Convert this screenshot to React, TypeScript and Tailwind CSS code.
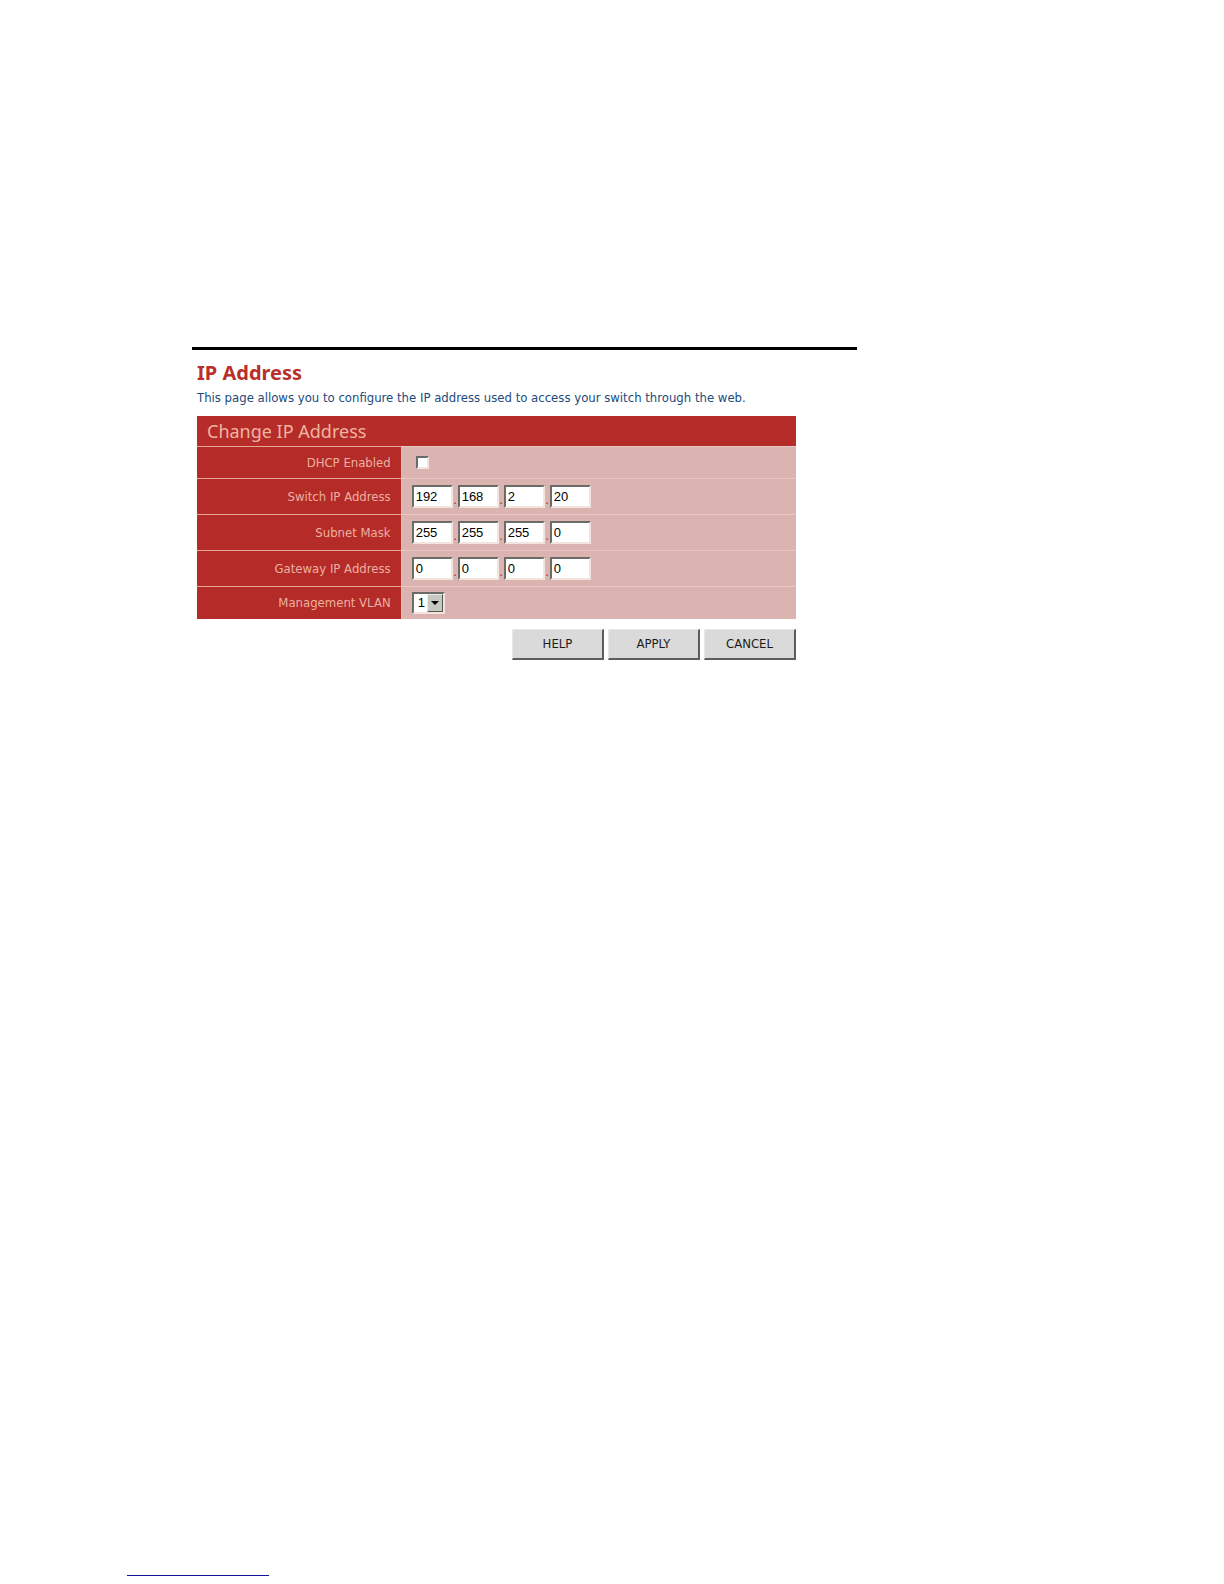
import React from 'react';

const sunken =
  'border-2 border-t-[#6b6b68] border-l-[#6b6b68] border-r-[#f3e4e0] border-b-[#f3e4e0] bg-white';

const addresses = [
  { label: 'Switch IP Address', octets: ['192', '168', '2', '20'] },
  { label: 'Subnet Mask', octets: ['255', '255', '255', '0'] },
  { label: 'Gateway IP Address', octets: ['0', '0', '0', '0'] },
];

function Row({
  label,
  htmlFor,
  height,
  children,
}: {
  label: string;
  htmlFor: string;
  height: string;
  children: React.ReactNode;
}) {
  return (
    <tr className={height}>
      <th
        scope="row"
        className="border-t border-[#e8a898] bg-[#b42b28] pr-2.5 text-right align-middle text-[13px] leading-5 font-normal text-[#eeb0a0]"
      >
        <label htmlFor={htmlFor}>{label}</label>
      </th>
      <td className="border-t border-l border-t-[#e8c8c4] border-l-[#e2bcb9] bg-[#dbb4b2] pl-2.5 align-middle">
        {children}
      </td>
    </tr>
  );
}

function Octets({ name, octets }: { name: string; octets: string[] }) {
  return (
    <div className="flex items-end">
      {octets.map((value, i) => (
        <React.Fragment key={i}>
          {i > 0 && (
            <span className="w-[5px] text-center text-[13px] leading-4 text-[#b42b48]">.</span>
          )}
          <input
            id={name + '-' + i}
            aria-label={name + ' part ' + (i + 1)}
            type="text"
            defaultValue={value}
            maxLength={3}
            className={`${sunken} h-[23px] w-[41px] rounded-none px-0.5 font-['Liberation_Sans',sans-serif] text-[13px] leading-4 text-black outline-none`}
          />
        </React.Fragment>
      ))}
    </div>
  );
}

export default function App() {
  return (
    <div className="flex min-h-screen flex-col justify-between bg-white font-['DejaVu_Sans_Condensed','Open_Sans',sans-serif]">
      <main className="pt-[347px] pr-4 pl-48">
        <div className="max-w-[665px] border-t-[3px] border-black pt-2 pl-[5px]">
          <h1 className="font-['Noto_Sans',sans-serif] text-xl leading-[30px] font-bold text-[#b8302c]">
            IP Address
          </h1>
          <p className="text-[13px] leading-5 text-[#1c4a7c]">
            This page allows you to configure the IP address used to access your switch through the web.
          </p>
          <form className="max-w-[599px] pt-2" onSubmit={(e) => e.preventDefault()}>
            <table className="w-full table-fixed border-separate border-spacing-0">
              <colgroup>
                <col className="w-[34%]" />
                <col />
              </colgroup>
              <thead>
                <tr className="h-[30px]">
                  <th
                    colSpan={2}
                    className="bg-[#b62c28] pl-2.5 text-left align-middle font-['Noto_Sans',sans-serif] text-lg leading-6 font-normal text-[#efb5a4]"
                  >
                    Change IP Address
                  </th>
                </tr>
              </thead>
              <tbody>
                <Row label="DHCP Enabled" htmlFor="dhcp" height="h-8">
                  <input
                    id="dhcp"
                    type="checkbox"
                    className={`${sunken} ml-1 block size-[13px] appearance-none checked:bg-[#404040]`}
                  />
                </Row>
                {addresses.map((a) => (
                  <Row key={a.label} label={a.label} htmlFor={a.label + '-0'} height="h-9">
                    <Octets name={a.label} octets={a.octets} />
                  </Row>
                ))}
                <Row label="Management VLAN" htmlFor="vlan" height="h-[33px]">
                  <div className={`${sunken} relative h-[22px] w-[33px]`}>
                    <select
                      id="vlan"
                      defaultValue="1"
                      className="block h-full w-full appearance-none rounded-none bg-white pl-1 font-['Liberation_Sans',sans-serif] text-[13px] leading-4 text-black outline-none"
                    >
                      <option>1</option>
                    </select>
                    <span className="pointer-events-none absolute inset-y-0 right-0 flex w-4 items-center justify-center border border-t-[#ececea] border-r-[#55554f] border-b-[#55554f] border-l-[#ececea] bg-[#c8c8c2]">
                      <svg viewBox="0 0 8 4" className="h-1 w-2" aria-hidden="true">
                        <path d="M0 0h8L4 4z" fill="#000" />
                      </svg>
                    </span>
                  </div>
                </Row>
              </tbody>
            </table>
            <div className="flex justify-end gap-1 pt-2.5">
              {['HELP', 'APPLY', 'CANCEL'].map((text) => (
                <button
                  key={text}
                  type="button"
                  className="h-[31px] w-[92px] border-t border-r-2 border-b-2 border-l border-t-[#e8e8e8] border-r-[#5c5c5c] border-b-[#5c5c5c] border-l-[#e8e8e8] bg-[#dadada] text-[13px] leading-5 text-[#1a1a1a]"
                >
                  {text}
                </button>
              ))}
            </div>
          </form>
        </div>
      </main>
      <footer className="pb-2 pl-[127px]">
        <div className="h-px w-[142px] bg-[#1414a0]" />
      </footer>
    </div>
  );
}
